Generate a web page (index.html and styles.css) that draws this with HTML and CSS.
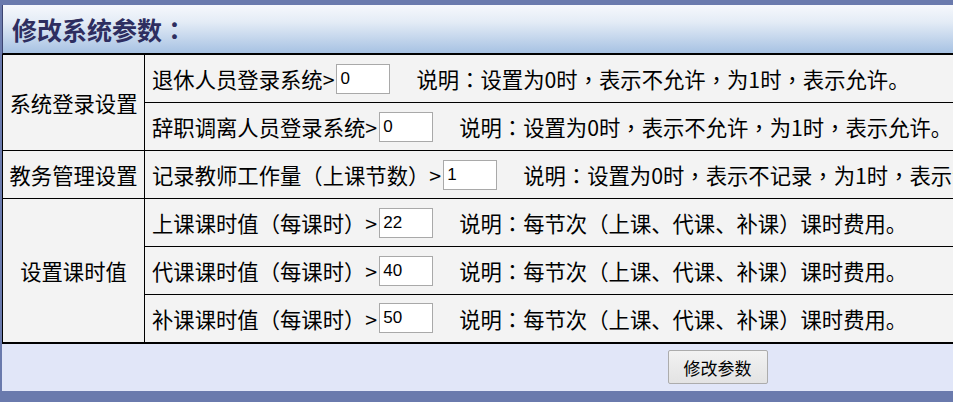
FILE: index.html
```html
<!DOCTYPE html>
<html lang="zh-CN">
<head>
<meta charset="utf-8">
<title>修改系统参数</title>
<link rel="stylesheet" href="styles.css">
</head>
<body>
<div class="panel">
  <div class="title">修改系统参数<span class="p" lang="zh-TW">：</span></div>
  <table class="params">
    <tr>
      <td class="group" rowspan="2">系统登录设置</td>
      <td class="item"><div class="line"><span>退休人员登录系统&gt;</span><input class="num" type="text" value="0"><span class="note">说明<span class="p" lang="zh-TW">：</span>设置为0时<span class="p" lang="zh-TW">，</span>表示不允许<span class="p" lang="zh-TW">，</span>为1时<span class="p" lang="zh-TW">，</span>表示允许。</span></div></td>
    </tr>
    <tr>
      <td class="item"><div class="line"><span>辞职调离人员登录系统&gt;</span><input class="num" type="text" value="0"><span class="note">说明<span class="p" lang="zh-TW">：</span>设置为0时<span class="p" lang="zh-TW">，</span>表示不允许<span class="p" lang="zh-TW">，</span>为1时<span class="p" lang="zh-TW">，</span>表示允许。</span></div></td>
    </tr>
    <tr>
      <td class="group">教务管理设置</td>
      <td class="item"><div class="line"><span>记录教师工作量<span class="p" lang="zh-TW">（</span>上课节数<span class="p" lang="zh-TW">）</span>&gt;</span><input class="num" type="text" value="1"><span class="note">说明<span class="p" lang="zh-TW">：</span>设置为0时<span class="p" lang="zh-TW">，</span>表示不记录<span class="p" lang="zh-TW">，</span>为1时<span class="p" lang="zh-TW">，</span>表示记录。</span></div></td>
    </tr>
    <tr>
      <td class="group" rowspan="3">设置课时值</td>
      <td class="item"><div class="line"><span>上课课时值<span class="p" lang="zh-TW">（</span>每课时<span class="p" lang="zh-TW">）</span>&gt;</span><input class="num" type="text" value="22"><span class="note">说明<span class="p" lang="zh-TW">：</span>每节次<span class="p" lang="zh-TW">（</span>上课、代课、补课<span class="p" lang="zh-TW">）</span>课时费用。</span></div></td>
    </tr>
    <tr>
      <td class="item"><div class="line"><span>代课课时值<span class="p" lang="zh-TW">（</span>每课时<span class="p" lang="zh-TW">）</span>&gt;</span><input class="num" type="text" value="40"><span class="note">说明<span class="p" lang="zh-TW">：</span>每节次<span class="p" lang="zh-TW">（</span>上课、代课、补课<span class="p" lang="zh-TW">）</span>课时费用。</span></div></td>
    </tr>
    <tr>
      <td class="item"><div class="line"><span>补课课时值<span class="p" lang="zh-TW">（</span>每课时<span class="p" lang="zh-TW">）</span>&gt;</span><input class="num" type="text" value="50"><span class="note">说明<span class="p" lang="zh-TW">：</span>每节次<span class="p" lang="zh-TW">（</span>上课、代课、补课<span class="p" lang="zh-TW">）</span>课时费用。</span></div></td>
    </tr>
  </table>
  <div class="actions"><button class="btn" type="button">修改参数</button></div>
</div>
<div class="scrollbar"></div>
</body>
</html>
```
FILE: styles.css
```css
html, body {
  margin: 0;
  padding: 0;
  overflow: hidden;
}
body {
  background: #6a7aad;
  padding: 5px 0 0 2px;
  font-family: "Noto Sans CJK SC", "Noto Sans", sans-serif;
  color: #000;
}
.p {
  font-family: "Noto Sans CJK TC", "Noto Sans CJK SC", sans-serif;
}
.panel {
  width: 1431px;
  background: #e1e6f8;
}
.title {
  height: 49px;
  box-sizing: border-box;
  border-left: 1px solid #3c4470;
  border-bottom: 1px solid #000;
  background: linear-gradient(#f6f8fc 0%, #e4ecf6 35%, #a7c2e3 100%);
  padding-left: 9px;
  display: flex;
  align-items: center;
  font-size: 25px;
  font-weight: bold;
  color: #2e2e60;
}
.params {
  width: 100%;
  border-collapse: collapse;
  background: #f3f3f3;
  font-size: 21.33px;
  border-bottom: 2px solid #000;
}
.params td {
  border: 1px solid #000;
  height: 48px;
  padding: 0;
  box-sizing: border-box;
  white-space: nowrap;
}
.group {
  width: 142px;
  text-align: center;
}
.item {
  padding-left: 7px !important;
}
.line {
  display: flex;
  align-items: center;
}
.num {
  width: 54px;
  height: 30px;
  box-sizing: border-box;
  margin: 0 0 0 2px;
  padding: 0 3px;
  border: 1px solid #a9a9a9;
  background: #fff;
  font-family: "Liberation Sans", Arial, sans-serif;
  font-size: 17px;
  color: #000;
  outline: none;
}
.note {
  margin-left: 26px;
}
.actions {
  height: 47px;
  display: flex;
  align-items: center;
  justify-content: center;
}
.btn {
  width: 100px;
  height: 34px;
  border: 1px solid #acacac;
  border-radius: 2px;
  background: linear-gradient(#f2f2f2, #e3e3e3);
  font-family: "Noto Sans CJK SC", "Noto Sans", sans-serif;
  font-size: 17px;
  color: #000;
  padding: 0;
}
.scrollbar {
  margin: 11px 0 0 74px;
  height: 2px;
  background: #c4c6cc;
}
```
